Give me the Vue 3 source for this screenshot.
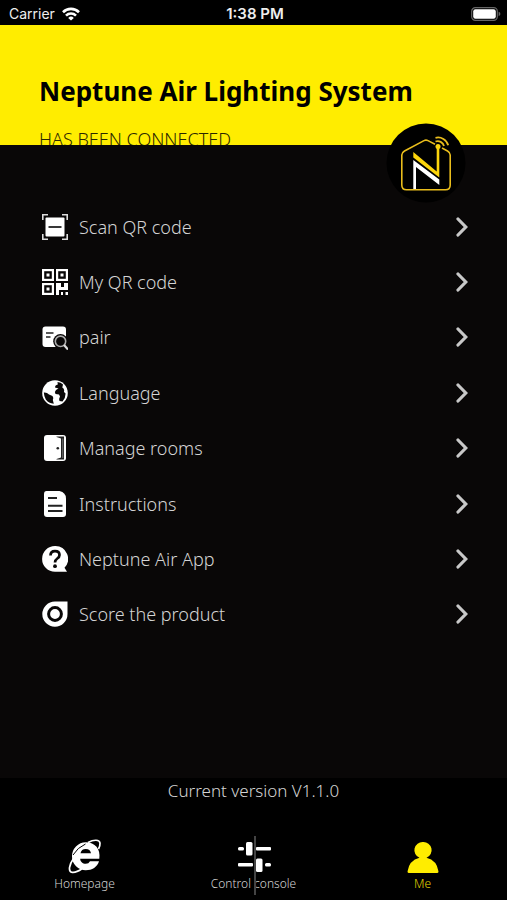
<script setup>
import { ref } from 'vue'

const items = [
  { icon: 'scan', label: 'Scan QR code' },
  { icon: 'qr', label: 'My QR code' },
  { icon: 'pair', label: 'pair' },
  { icon: 'globe', label: 'Language' },
  { icon: 'door', label: 'Manage rooms' },
  { icon: 'doc', label: 'Instructions' },
  { icon: 'help', label: 'Neptune Air App' },
  { icon: 'score', label: 'Score the product' },
]
const tabs = [
  { id: 'home', label: 'Homepage' },
  { id: 'console', label: 'Control console' },
  { id: 'me', label: 'Me' },
]
const active = ref('me')
</script>

<template>
  <div class="app">
    <div class="status">
      <div class="carrier">
        <span>Carrier</span>
        <svg class="wifi" viewBox="0 0 18 14" aria-hidden="true">
          <g fill="none" stroke="#fff" stroke-width="2.6">
            <path d="M1 5.2A11.4 11.4 0 0 1 17 5.2" />
            <path d="M4 8.6A7 7 0 0 1 14 8.6" />
          </g>
          <path d="M9 13.6L6.2 10.9A4 4 0 0 1 11.8 10.9Z" fill="#fff" />
        </svg>
      </div>
      <span class="time">1:38 PM</span>
      <svg class="battery" viewBox="0 0 30 14" aria-hidden="true">
        <rect x=".7" y=".7" width="25.6" height="12.6" rx="3.6" fill="none" stroke="#666" stroke-width="1.2" />
        <rect x="2.2" y="2.2" width="22.6" height="9.6" rx="2.2" fill="#fff" />
        <path d="M27.6 4.8Q29.4 5.4 29.4 7T27.6 9.2Z" fill="#666" />
      </svg>
    </div>

    <header class="hero">
      <h1>Neptune Air Lighting System</h1>
      <p>HAS BEEN CONNECTED</p>
    </header>

    <main>
      <svg class="logo" viewBox="0 0 80 80" aria-hidden="true">
        <circle cx="40" cy="40" r="39.5" fill="#000" />
        <g fill="none" stroke="#e9bd1c" stroke-width="1.6">
          <path d="M49 21.2L42 17.6Q40 16.6 38 17.6L18.5 28Q15.8 29.6 15.8 32V62Q15.8 66.8 20.5 66.8H59.5Q64.2 66.8 64.2 62V32Q64.2 29.6 61.5 28L56 25" />
          <path d="M49.5 18.5A6.5 6.5 0 0 1 58 23M49.5 14.8A10.500 10.500 0 0 1 62.2 22.2" stroke-width="1.8" />
        </g>
        <path d="M27.3 29L50.7 48.5V25H53.3V54.5L27.3 34.5Z" fill="#fbd40c" />
        <circle cx="52" cy="23.5" r="2.5" fill="#fbd40c" />
        <path d="M27.3 37L53.3 56.5V62L30 44V66H27.3Z" fill="#fff" />
      </svg>

      <ul class="menu">
        <li v-for="item in items" :key="item.icon">
          <button type="button" class="row">
            <svg class="icon" viewBox="0 0 26 26" aria-hidden="true">
              <template v-if="item.icon === 'scan'">
                <path d="M.8 6V.8H6M20 .8H25.2V6M25.2 20V25.2H20M6 25.2H.8V20" fill="none" stroke="#ddd" stroke-width="1.6" />
                <rect x="3.500" y="3.500" width="19" height="19" rx="1" fill="#fff" />
                <path d="M6.500 13H19.500" stroke="#222" stroke-width="1.8" />
              </template>
              <template v-else-if="item.icon === 'qr'">
                <g fill="none" stroke="#fff" stroke-width="2.2">
                  <rect x="1.1" y="1.1" width="9.800" height="9.800" />
                  <rect x="15.1" y="1.1" width="9.800" height="9.800" />
                  <rect x="1.1" y="15.1" width="9.800" height="9.800" />
                </g>
                <path d="M4.500 4.500h3v3h-3zM18.500 4.500h3v3h-3zM4.500 18.500h3v3h-3zM14 14h5v4h3v-4h4v7h-9v5h-3zM19 23h2v3h-2zM23.500 23h2.500v3h-2.500z" fill="#fff" />
              </template>
              <template v-else-if="item.icon === 'pair'">
                <rect x=".5" y="2.5" width="23.5" height="20.5" rx="3" fill="#fff" />
                <path d="M4 9H11.500M4 13H8.500" stroke="#222" stroke-width="1.6" />
                <circle cx="18.500" cy="17.300" r="7.300" fill="#090707" />
                <circle cx="18.500" cy="17.300" r="5.200" fill="none" stroke="#aaa" stroke-width="1.600" />
                <path d="M22 21L26 25.500" stroke="#ddd" stroke-width="2.200" />
              </template>
              <template v-else-if="item.icon === 'globe'">
                <circle cx="13" cy="13" r="12.800" fill="#fff" />
                <path d="M1.800 12.500Q5 12.200 7 14.500L10.500 16Q12 18 10.800 20L11.800 23.700Q6.500 23.500 3.800 19.500Q2 16 1.800 12.500Z" fill="#090707" />
                <path d="M15.500 2Q19 2 21 4.500L20.300 7.500Q22.800 9 22 12L23.600 13.500Q23.600 18 20.500 21.500L17.500 21Q16.500 19 18 16.500L17 14.500L13.500 14Q12 12 14 10L16.500 8.500L13 7.500Q13 5 15.800 4.500Z" fill="#090707" />
              </template>
              <template v-else-if="item.icon === 'door'">
                <rect x="2" y="0" width="22" height="26" rx="3" fill="#fff" />
                <path d="M14.500 1.500H22V24.500H14.500V24L19 22.500V3.500L14.500 2Z" fill="#222" />
                <path d="M20.800 3.500V23" stroke="#777" stroke-width="1" />
                <circle cx="15.800" cy="13.200" r="1.300" fill="#222" />
              </template>
              <template v-else-if="item.icon === 'doc'">
                <path d="M4.500 0H17.500Q24 1.500 24 7.500V23Q24 26 21 26H5Q2 26 2 23V3Q2 0 4.500 0Z" fill="#fff" />
                <path d="M6 7H15M6 14.800H20.500M6 20H20.500" stroke="#222" stroke-width="1.900" />
              </template>
              <template v-else-if="item.icon === 'help'">
                <path d="M13 0A12.900 12.900 0 0 1 22.500 21.800L25 25.800H13A12.900 12.900 0 0 1 13 0Z" fill="#fff" />
                <path d="M8.500 9.500Q8.500 5.200 13 5.200T17.500 9Q17.500 11 15.300 12.500T13 16.500" fill="none" stroke="#090707" stroke-width="2.700" />
                <circle cx="13" cy="20.200" r="1.900" fill="#090707" />
              </template>
              <template v-else>
                <path d="M13 .5H25.500V13A12.600 12.600 0 1 1 13 .5Z" fill="#fff" />
                <circle cx="13" cy="13" r="6.400" fill="none" stroke="#090707" stroke-width="3" />
              </template>
            </svg>
            <span>{{ item.label }}</span>
            <svg class="chevron" viewBox="0 0 12 20" aria-hidden="true">
              <path d="M2 2L9.800 10L2 18" fill="none" stroke="#c8c8c8" stroke-width="3.200" stroke-linecap="round" />
            </svg>
          </button>
        </li>
      </ul>
    </main>

    <footer>
      <p class="version">Current version V1.1.0</p>
      <nav>
        <button
          v-for="tab in tabs"
          :key="tab.id"
          type="button"
          class="tab"
          :class="{ active: active === tab.id }"
          @click="active = tab.id"
        >
          <svg class="tab-icon" viewBox="0 0 34 36" aria-hidden="true">
            <template v-if="tab.id === 'home'">
              <path d="M20 4.500C26 1.300 31.500 1.500 32 5Q32.200 8 30.500 11" fill="none" stroke="#fff" stroke-width="1.700" />
              <path d="M5.500 20.500C1 27 .2 33 3.500 34.200Q7.500 35.300 14 30.800" fill="none" stroke="#fff" stroke-width="1.700" />
              <path d="M17.800 4.300A14 14 0 0 0 4 18.500A13.800 13.800 0 0 0 17.800 32.300C24 32.300 29.500 29 31 23.300H22Q20.800 25.800 17.800 25.800C14.500 25.800 12.200 23.500 12.200 20.700H31.300C32.800 11 27 4.300 17.800 4.300ZM12.500 15.300Q13.300 11 17.800 11T23 15.300Z" fill="#fff" />
              <path d="M5 17Q9.500 9.500 17.500 6" fill="none" stroke="#000" stroke-width="1" />
            </template>
            <template v-else-if="tab.id === 'console'">
              <g fill="#fff">
                <rect x="1" y="9" width="6" height="3.500" rx="1.500" />
                <rect x="9" y="4" width="6.500" height="13.500" rx="1.500" />
                <rect x="19" y="9" width="15" height="3.500" rx="1" />
                <rect x="1" y="25" width="15" height="3.500" rx="1" />
                <rect x="19" y="20.500" width="6.500" height="13.500" rx="1.500" />
                <rect x="28" y="25" width="6" height="3.500" rx="1.500" />
              </g>
            </template>
            <template v-else>
              <path d="M17 4A8.200 8.200 0 0 1 20.500 19.800Q31 22.500 32.500 33.500Q32.500 35 31 35H3Q1.500 35 1.500 33.500Q3 22.500 13.500 19.800A8.200 8.200 0 0 1 17 4Z" fill="#ffed00" />
            </template>
          </svg>
          <span>{{ tab.label }}</span>
        </button>
        <span class="divider"></span>
      </nav>
    </footer>
  </div>
</template>

<style>
body {
  background: #000;
}
</style>

<style scoped>
.app {
  display: flex;
  flex-direction: column;
  min-height: 100vh;
  background: #090707;
  color: #d4d4d4;
  font-family: "Noto Sans", "Open Sans", sans-serif;
  font-weight: 300;
}
.status {
  display: grid;
  grid-template-columns: 1fr auto 1fr;
  align-items: center;
  height: 25px;
  padding: 2px 6px 0 9px;
  box-sizing: border-box;
  background: #000;
  color: #eee;
  font: 400 14px/18px Inter, sans-serif;
}
.carrier {
  display: flex;
  align-items: center;
  gap: 7px;
}
.wifi {
  width: 18px;
  height: 14px;
}
.time {
  font-size: 15px;
  font-weight: 600;
}
.battery {
  justify-self: end;
  width: 30px;
  height: 14px;
}
.hero {
  height: 120px;
  padding: 48px 39px 0;
  box-sizing: border-box;
  overflow: hidden;
  background: #ffed00;
  color: #000;
}
h1 {
  margin: 0;
  font-size: 26px;
  line-height: 36px;
  font-weight: 700;
  white-space: nowrap;
}
.hero p {
  margin: 18px 0 0;
  color: #2b2700;
  font-size: 18px;
  line-height: 24px;
}
main {
  flex: 1;
  display: flex;
  flex-direction: column;
  padding: 0 39px;
}
.logo {
  align-self: flex-end;
  width: 80px;
  height: 80px;
  margin-top: -22px;
  margin-right: 2px;
}
.menu {
  display: grid;
  grid-auto-rows: 1fr;
  height: 443px;
  margin: -4px 0 0;
  padding: 0;
  list-style: none;
}
.menu li {
  display: flex;
}
.row {
  flex: 1;
  display: flex;
  align-items: center;
  gap: 11px;
  padding: 0 0 0 3px;
  border: 0;
  background: none;
  color: inherit;
  font: inherit;
  font-size: 18px;
  line-height: 24px;
  text-align: left;
}
.row span {
  flex: 1;
}
.icon {
  width: 26px;
  height: 26px;
}
.chevron {
  width: 12px;
  height: 20px;
}
footer {
  background: #000;
}
.version {
  margin: 0;
  font-size: 17px;
  line-height: 26px;
  text-align: center;
}
nav {
  position: relative;
  display: grid;
  grid-template-columns: repeat(3, 1fr);
  padding: 34px 0 8px;
}
.tab {
  display: flex;
  flex-direction: column;
  align-items: center;
  gap: 2px;
  padding: 0;
  border: 0;
  background: none;
  color: inherit;
  font: inherit;
  font-size: 12px;
  line-height: 16px;
}
.tab.active {
  color: #e6d600;
}
.tab-icon {
  width: 34px;
  height: 36px;
}
.divider {
  position: absolute;
  top: 32px;
  bottom: 5px;
  left: 50%;
  width: 2px;
  background: #444;
}
</style>
